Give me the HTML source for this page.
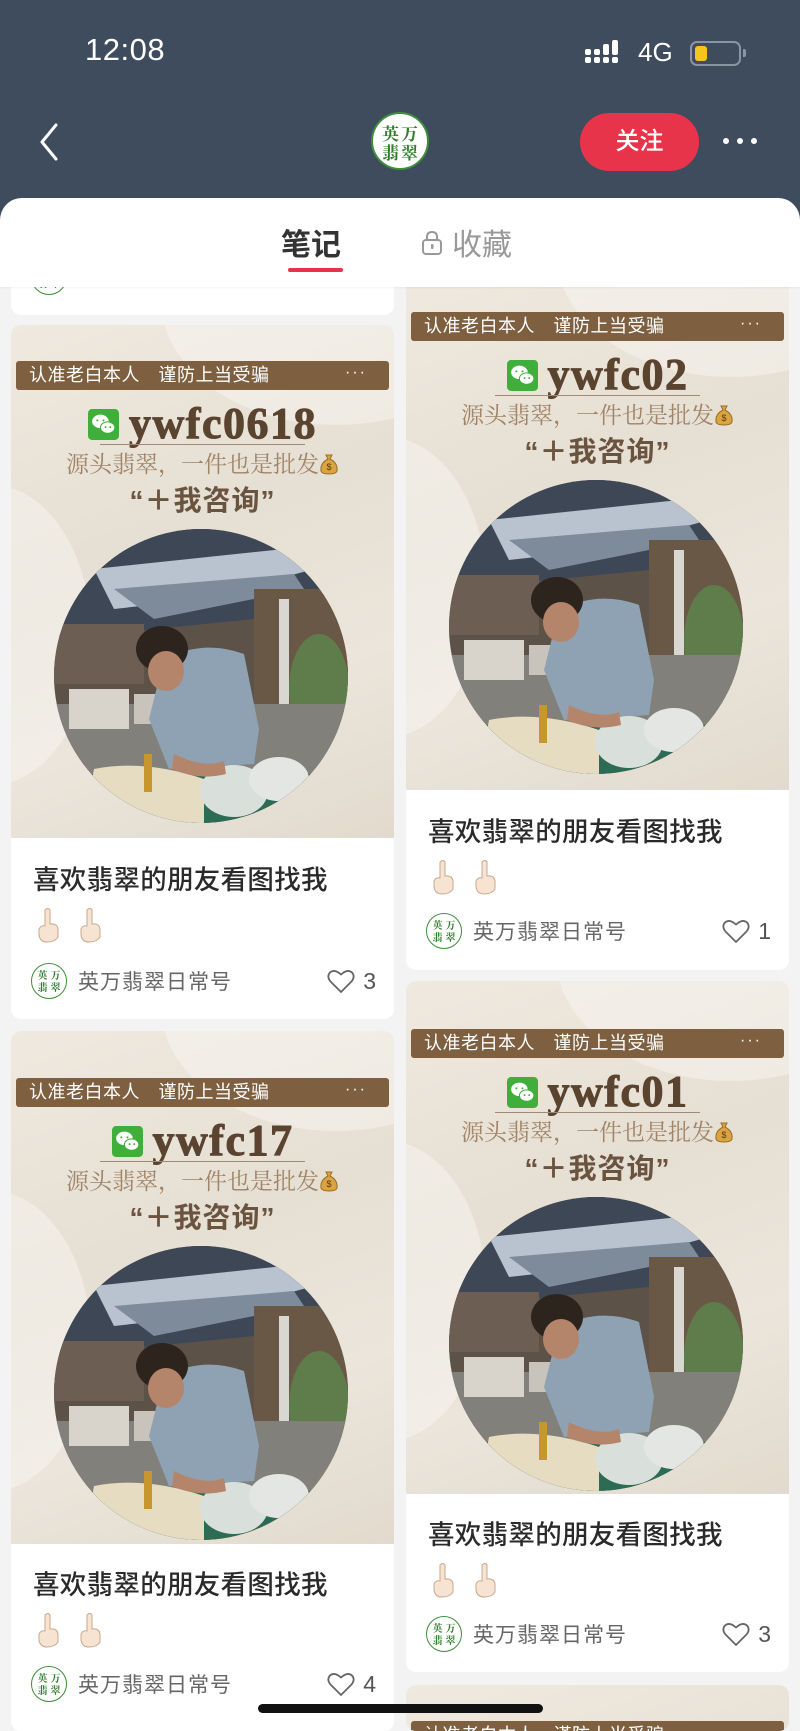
<!DOCTYPE html>
<html><head><meta charset="utf-8">
<style>
*{margin:0;padding:0;box-sizing:border-box}
html{width:800px;height:1731px;overflow:hidden}
body{width:800px;height:1731px;overflow:hidden;background:#f3f3f3;font-family:"Liberation Sans","Noto Sans CJK SC",sans-serif;position:relative}
.hdr{position:absolute;left:0;top:0;width:800px;height:220px;background:#3e4c5e;z-index:4}
.time{position:absolute;left:85px;top:32px;color:#fff;font-size:31px;font-weight:500;letter-spacing:0.5px}
.tabs{position:absolute;left:0;top:198px;width:800px;height:89px;background:#fff;border-radius:22px 22px 0 0;z-index:5;box-shadow:0 1px 2px rgba(0,0,0,0.05)}
.card{position:absolute;width:383px;background:#fff;border-radius:10px;overflow:hidden}
.img{position:absolute;left:0;top:0;width:383px;height:513px;background:linear-gradient(160deg,#efe9df 0%,#e6dfd3 40%,#ebe5db 70%,#e2dacd 100%);overflow:hidden}
.swirl{position:absolute;border-radius:50%;background:rgba(255,255,255,0.35)}
.art{position:absolute;left:0;width:383px;height:470px}
.banner{position:absolute;left:5px;top:0;width:373px;height:29px;background:#7e6041;border-radius:3px;color:#fff;font-size:18px;line-height:29px;padding-left:13px;letter-spacing:0.5px}
.banner span{position:absolute;right:22px;top:-3px;font-size:16px;letter-spacing:2px}
.wx{position:absolute;left:0;width:383px;top:40px;display:flex;justify-content:center;align-items:center;gap:10px}
.wx b{font-family:"Liberation Serif","Noto Serif CJK SC",serif;font-size:44px;color:#5a4430;font-weight:900;-webkit-text-stroke:1px #5a4430;letter-spacing:1.5px;line-height:46px}
.ln{position:absolute;left:89px;top:83px;width:205px;height:1px;background:#9f8a76}
.slog{position:absolute;left:0;width:383px;top:88px;text-align:center;font-family:"Liberation Serif","Noto Serif CJK SC",serif;font-size:23px;color:#a08468;line-height:32px}
.ask{position:absolute;left:0;width:383px;top:123px;text-align:center;font-size:28px;font-weight:bold;color:#6a533f;line-height:34px;letter-spacing:1px}
.photo{position:absolute;left:43px;top:168px;width:294px;height:294px;border-radius:50%;overflow:hidden}
.ttl{position:absolute;left:22px;font-size:26.5px;color:#2a2a2a;line-height:32px;letter-spacing:0.3px;font-weight:500}
.emo{position:absolute;left:24px;display:flex;gap:16px}
.au{position:absolute;left:20px;width:345px;height:38px;display:flex;align-items:center}
.av{width:36px;height:36px;border-radius:50%;border:1.5px solid #3e8e3a;background:#fff;display:grid;grid-template-columns:1fr 1fr;font-family:"Noto Serif CJK SC",serif;color:#2f7d2b;font-size:10px;line-height:12px;text-align:center;padding:5px 4px;font-weight:bold}
.nm{margin-left:11px;font-size:21px;color:#666;letter-spacing:1px}
.lk{margin-left:auto;display:flex;align-items:center;gap:8px;font-size:23px;color:#555}
</style></head><body>

<svg width="0" height="0" style="position:absolute">
<defs>
<symbol id="ph" viewBox="0 0 294 294">
<rect width="294" height="294" fill="#5d5247"/>
<polygon points="0,0 294,0 294,60 200,90 0,110" fill="#3d4756"/>
<polygon points="40,40 230,20 260,40 150,70 60,80" fill="#b8c3cf"/>
<polygon points="60,60 240,45 250,60 100,90" fill="#7e8b9b"/>
<rect x="0" y="95" width="90" height="60" fill="#6c5e52"/>
<rect x="200" y="60" width="94" height="150" fill="#6a5846"/>
<rect x="225" y="70" width="10" height="170" fill="#d9d7d2"/>
<ellipse cx="265" cy="160" rx="30" ry="55" fill="#5f7d4a"/>
<rect x="0" y="175" width="294" height="119" fill="#82807b"/>
<rect x="15" y="160" width="60" height="40" fill="#d8d4cc"/>
<rect x="80" y="165" width="30" height="30" fill="#c8c4bc"/>
<path d="M110 130 Q150 110 190 125 L205 200 L200 235 L115 240 L95 190 Z" fill="#8ea2b4"/>
<ellipse cx="108" cy="120" rx="26" ry="23" fill="#2e241e"/>
<ellipse cx="112" cy="142" rx="18" ry="20" fill="#b4856a"/>
<rect x="0" y="245" width="294" height="49" fill="#2e6b55"/>
<path d="M40 240 Q90 230 150 250 L150 294 L30 294 Z" fill="#e6dcc2"/>
<ellipse cx="180" cy="262" rx="34" ry="26" fill="#d9e0dc"/>
<ellipse cx="225" cy="250" rx="30" ry="22" fill="#e3e6e2"/>
<rect x="90" y="225" width="8" height="38" fill="#c8962e"/>
<path d="M120 225 Q150 240 170 232 L172 245 Q145 252 118 240 Z" fill="#b4856a"/>
</symbol>
<symbol id="hand" viewBox="0 0 26 36">
<path d="M10 3 Q13 0 15 3 L15 17 Q22 16 23 22 L23 30 Q20 35 12 35 Q5 35 4 28 L4 22 Q6 18 10 19 Z" fill="#f6e3d2" stroke="#c9a88e" stroke-width="1"/>
</symbol>
<symbol id="heart" viewBox="0 0 28 26">
<path d="M14 24 L3.5 13.5 Q-0.5 8.5 3 4.5 Q7.5 0.5 14 6.5 Q20.5 0.5 25 4.5 Q28.5 8.5 24.5 13.5 Z" fill="none" stroke="#666" stroke-width="1.8" stroke-linejoin="round"/>
</symbol>
<symbol id="wxi" viewBox="0 0 30 30">
<rect width="30" height="30" rx="4" fill="#3fae3b"/>
<ellipse cx="12" cy="12" rx="8" ry="6.5" fill="#fff"/>
<ellipse cx="19" cy="18" rx="7" ry="5.5" fill="#fff" stroke="#3fae3b" stroke-width="1"/>
<circle cx="9" cy="11" r="1" fill="#3fae3b"/><circle cx="15" cy="11" r="1" fill="#3fae3b"/>
<circle cx="17" cy="17.5" r="0.9" fill="#3fae3b"/><circle cx="21.5" cy="17.5" r="0.9" fill="#3fae3b"/>
</symbol>
<symbol id="bag" viewBox="0 0 20 22">
<path d="M7 2 L13 2 L11 6 Q19 10 18 18 Q17 21 10 21 Q3 21 2 18 Q1 10 9 6 Z" fill="#d9a441" stroke="#9b6c22" stroke-width="1"/>
<text x="10" y="17" font-size="9" text-anchor="middle" fill="#5a3b10" font-family="Liberation Sans">$</text>
</symbol>
</defs></svg>

<div class="hdr">
  <div class="time">12:08</div>
  <svg style="position:absolute;left:585px;top:40px" width="40" height="26" viewBox="0 0 40 26">
    <rect x="0" y="17" width="6" height="6" rx="2" fill="#fff"/><rect x="0" y="9" width="6" height="6" rx="2" fill="#fff"/>
    <rect x="9" y="17" width="6" height="6" rx="2" fill="#fff"/><rect x="9" y="9" width="6" height="6" rx="2" fill="#fff"/>
    <rect x="18" y="17" width="6" height="6" rx="2" fill="#fff"/><rect x="18" y="4" width="6" height="11" rx="2" fill="#fff"/>
    <rect x="27" y="17" width="6" height="6" rx="2" fill="#fff"/><rect x="27" y="0" width="6" height="15" rx="2" fill="#fff"/>
  </svg>
  <div style="position:absolute;left:638px;top:37px;color:#fff;font-size:26px">4G</div>
  <div style="position:absolute;left:690px;top:41px;width:51px;height:25px;border:2px solid #8a95a3;border-radius:7px"><div style="position:absolute;left:3px;top:3px;width:12px;height:15px;background:#f5c51c;border-radius:3px"></div></div>
  <div style="position:absolute;left:743px;top:49px;width:3px;height:8px;background:#8a95a3;border-radius:0 2px 2px 0"></div>
  <svg style="position:absolute;left:38px;top:122px" width="22" height="40" viewBox="0 0 22 40"><path d="M18 3 L4 20 L18 37" fill="none" stroke="#fff" stroke-width="3" stroke-linecap="round" stroke-linejoin="round"/></svg>
  <div style="position:absolute;left:371px;top:112px;width:58px;height:58px;border-radius:50%;background:#fff;border:2px solid #3e8e3a;display:grid;grid-template-columns:1fr 1fr;padding:9px 8px;font-family:'Noto Serif CJK SC',serif;color:#2f7d2b;font-size:17px;line-height:19px;text-align:center;font-weight:bold"><span>英</span><span>万</span><span>翡</span><span>翠</span></div>
  <div style="position:absolute;left:580px;top:113px;width:119px;height:58px;border-radius:29px;background:#e8344a;color:#fff;font-size:24px;line-height:58px;text-align:center;font-weight:500">关注</div>
  <div style="position:absolute;left:723px;top:138px;display:flex;gap:8px"><i style="width:6px;height:6px;border-radius:50%;background:#fff;display:block"></i><i style="width:6px;height:6px;border-radius:50%;background:#fff;display:block"></i><i style="width:6px;height:6px;border-radius:50%;background:#fff;display:block"></i></div>
</div>

<div class="tabs">
  <div style="position:absolute;left:281px;top:22px;font-size:30px;font-weight:bold;color:#333">笔记</div>
  <div style="position:absolute;left:288px;top:70px;width:55px;height:4px;background:#e8344a;border-radius:2px"></div>
  <svg style="position:absolute;left:421px;top:32px" width="22" height="26" viewBox="0 0 22 26"><rect x="2" y="10" width="18" height="14" rx="3" fill="none" stroke="#999" stroke-width="2"/><path d="M6 10 V7 Q6 2 11 2 Q16 2 16 7 V10" fill="none" stroke="#999" stroke-width="2"/><rect x="10" y="14" width="2.5" height="5" rx="1" fill="#999"/></svg>
  <div style="position:absolute;left:452px;top:22px;font-size:30px;color:#999">收藏</div>
</div>

<div class="card" style="left:11px;top:-100px;height:415px">
  <div class="au" style="top:358px"><div class="av"><span>英</span><span>万</span><span>翡</span><span>翠</span></div></div>
</div>

<div class="card" style="left:11px;top:325px;height:694px">
  <div class="img"><div class="swirl" style="left:150px;top:-150px;width:350px;height:250px"></div><div class="swirl" style="left:-120px;top:160px;width:200px;height:300px"></div>
   <div class="art" style="top:36px">
    <div class="banner">认准老白本人　谨防上当受骗<span>···</span></div>
    <div class="wx"><svg width="31" height="31"><use href="#wxi"/></svg><b>ywfc0618</b></div>
    <div class="ln"></div>
    <div class="slog">源头翡翠，一件也是批发<svg width="20" height="22" style="vertical-align:-3px"><use href="#bag"/></svg></div>
    <div class="ask">“＋我咨询”</div>
    <svg class="photo" viewBox="0 0 294 294"><use href="#ph"/></svg>
   </div></div>
  <div class="ttl" style="top:539px">喜欢翡翠的朋友看图找我</div>
  <div class="emo" style="top:582px"><svg width="26" height="36"><use href="#hand"/></svg><svg width="26" height="36"><use href="#hand"/></svg></div>
  <div class="au" style="top:637px"><div class="av"><span>英</span><span>万</span><span>翡</span><span>翠</span></div><div class="nm">英万翡翠日常号</div><div class="lk"><svg width="28" height="26"><use href="#heart"/></svg>3</div></div>
</div>

<div class="card" style="left:11px;top:1031px;height:700px">
  <div class="img"><div class="swirl" style="left:150px;top:-150px;width:350px;height:250px"></div><div class="swirl" style="left:-120px;top:160px;width:200px;height:300px"></div>
   <div class="art" style="top:47px">
    <div class="banner">认准老白本人　谨防上当受骗<span>···</span></div>
    <div class="wx"><svg width="31" height="31"><use href="#wxi"/></svg><b>ywfc17</b></div>
    <div class="ln"></div>
    <div class="slog">源头翡翠，一件也是批发<svg width="20" height="22" style="vertical-align:-3px"><use href="#bag"/></svg></div>
    <div class="ask">“＋我咨询”</div>
    <svg class="photo" viewBox="0 0 294 294"><use href="#ph"/></svg>
   </div></div>
  <div class="ttl" style="top:538px">喜欢翡翠的朋友看图找我</div>
  <div class="emo" style="top:581px"><svg width="26" height="36"><use href="#hand"/></svg><svg width="26" height="36"><use href="#hand"/></svg></div>
  <div class="au" style="top:634px"><div class="av"><span>英</span><span>万</span><span>翡</span><span>翠</span></div><div class="nm">英万翡翠日常号</div><div class="lk"><svg width="28" height="26"><use href="#heart"/></svg>4</div></div>
</div>

<div class="card" style="left:406px;top:277px;height:693px">
  <div class="img"><div class="swirl" style="left:150px;top:-150px;width:350px;height:250px"></div><div class="swirl" style="left:-120px;top:160px;width:200px;height:300px"></div>
   <div class="art" style="top:35px">
    <div class="banner">认准老白本人　谨防上当受骗<span>···</span></div>
    <div class="wx"><svg width="31" height="31"><use href="#wxi"/></svg><b>ywfc02</b></div>
    <div class="ln"></div>
    <div class="slog">源头翡翠，一件也是批发<svg width="20" height="22" style="vertical-align:-3px"><use href="#bag"/></svg></div>
    <div class="ask">“＋我咨询”</div>
    <svg class="photo" viewBox="0 0 294 294"><use href="#ph"/></svg>
   </div></div>
  <div class="ttl" style="top:539px">喜欢翡翠的朋友看图找我</div>
  <div class="emo" style="top:582px"><svg width="26" height="36"><use href="#hand"/></svg><svg width="26" height="36"><use href="#hand"/></svg></div>
  <div class="au" style="top:635px"><div class="av"><span>英</span><span>万</span><span>翡</span><span>翠</span></div><div class="nm">英万翡翠日常号</div><div class="lk"><svg width="28" height="26"><use href="#heart"/></svg>1</div></div>
</div>

<div class="card" style="left:406px;top:981px;height:691px">
  <div class="img"><div class="swirl" style="left:150px;top:-150px;width:350px;height:250px"></div><div class="swirl" style="left:-120px;top:160px;width:200px;height:300px"></div>
   <div class="art" style="top:48px">
    <div class="banner">认准老白本人　谨防上当受骗<span>···</span></div>
    <div class="wx"><svg width="31" height="31"><use href="#wxi"/></svg><b>ywfc01</b></div>
    <div class="ln"></div>
    <div class="slog">源头翡翠，一件也是批发<svg width="20" height="22" style="vertical-align:-3px"><use href="#bag"/></svg></div>
    <div class="ask">“＋我咨询”</div>
    <svg class="photo" viewBox="0 0 294 294"><use href="#ph"/></svg>
   </div></div>
  <div class="ttl" style="top:538px">喜欢翡翠的朋友看图找我</div>
  <div class="emo" style="top:581px"><svg width="26" height="36"><use href="#hand"/></svg><svg width="26" height="36"><use href="#hand"/></svg></div>
  <div class="au" style="top:634px"><div class="av"><span>英</span><span>万</span><span>翡</span><span>翠</span></div><div class="nm">英万翡翠日常号</div><div class="lk"><svg width="28" height="26"><use href="#heart"/></svg>3</div></div>
</div>

<div class="card" style="left:406px;top:1685px;height:46px">
  <div class="img"><div class="art" style="top:36px"><div class="banner">认准老白本人　谨防上当受骗<span>···</span></div></div></div>
</div>

<div style="position:absolute;left:258px;top:1704px;width:285px;height:9px;border-radius:5px;background:#111;z-index:6"></div>
</body></html>
